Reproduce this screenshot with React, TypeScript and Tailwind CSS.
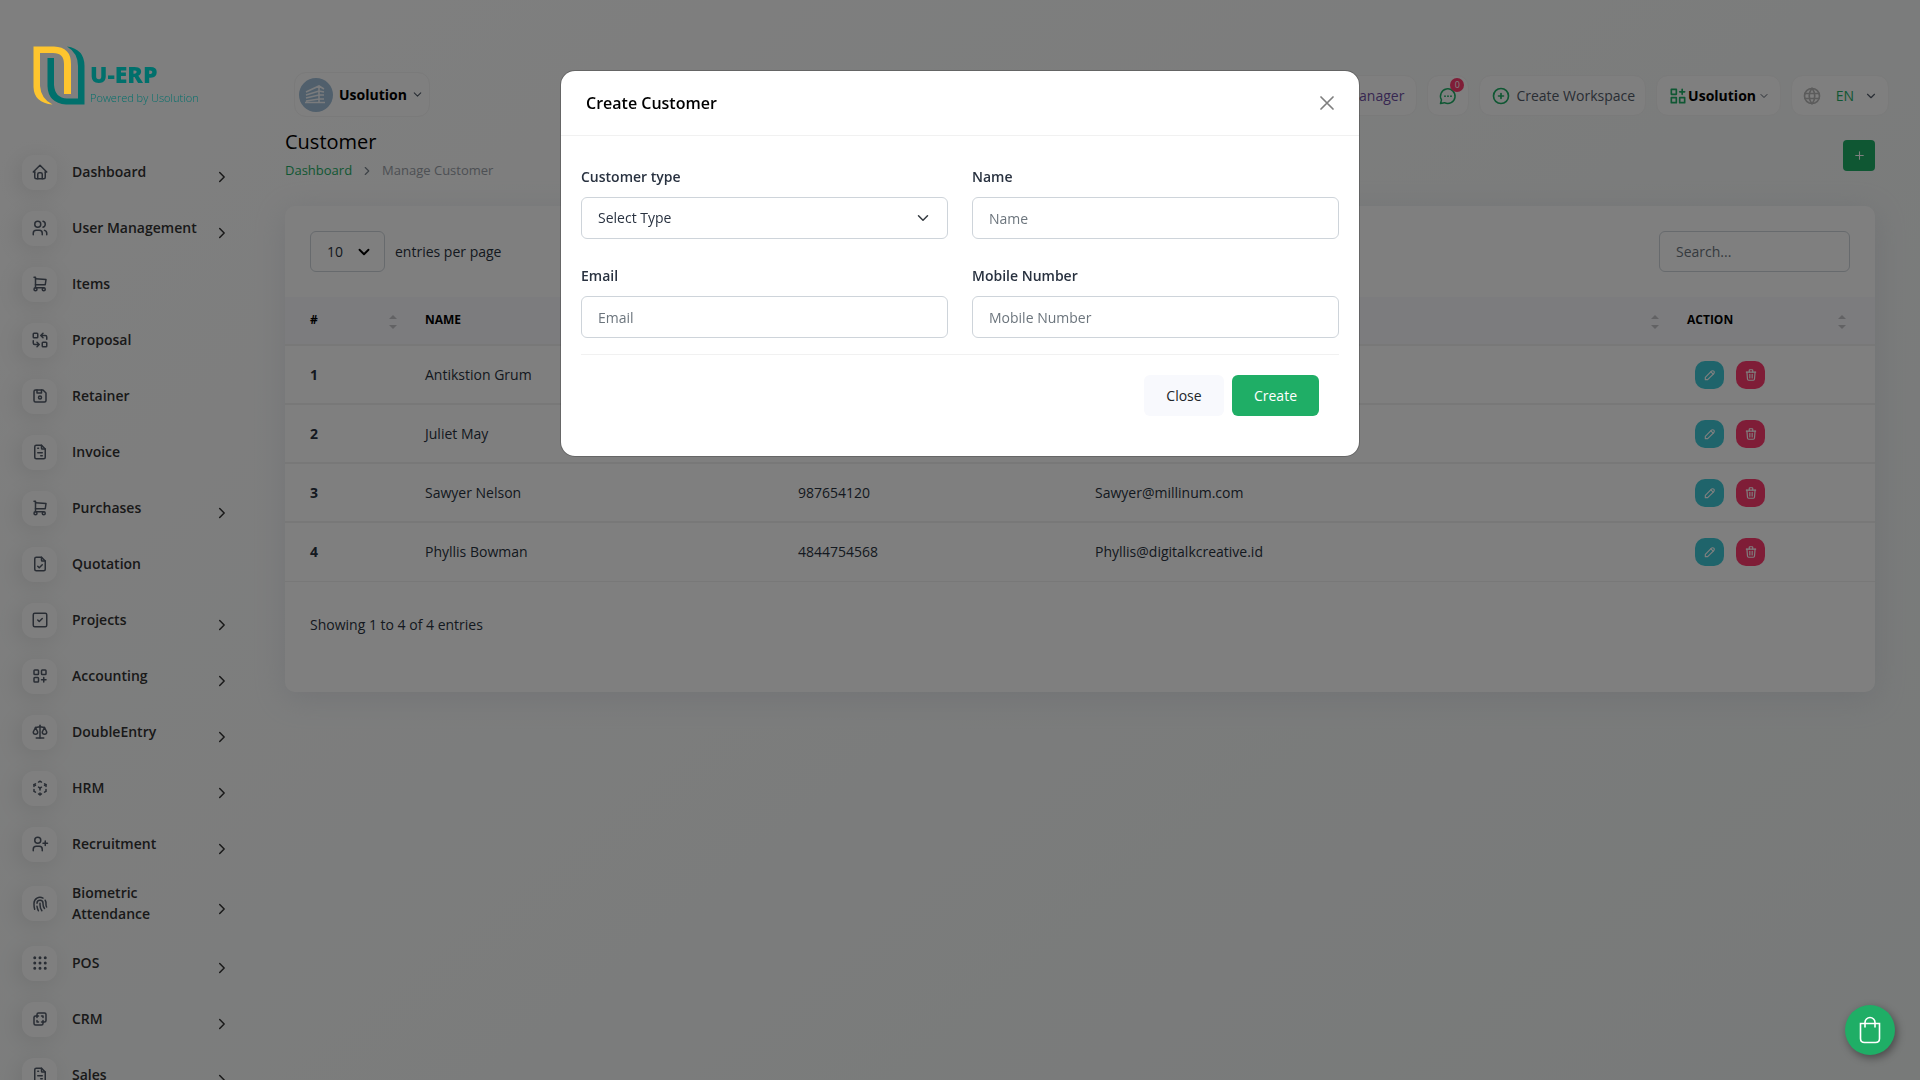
import React, { useState } from 'react'
import {
  TbHome, TbUsers, TbShoppingCart, TbReplace, TbDeviceFloppy, TbFileInvoice, TbFileCheck,
  TbSquareCheck, TbLayoutGridAdd, TbScale, TbFingerprint, TbGridDots,
  TbLayersDifference, TbCube3dSphere, TbChevronRight, TbChevronDown, TbCirclePlus,
  TbWorld, TbPencil, TbTrash, TbPlus,
} from 'react-icons/tb'

function UserPlus({ size }: { size: number }) {
  return (
    <svg viewBox="0 0 24 24" width={size} height={size} fill="none" stroke="currentColor" strokeWidth="2" strokeLinecap="round" strokeLinejoin="round">
      <circle cx="9" cy="7" r="4" />
      <path d="M3 21v-2a4 4 0 0 1 4-4h4a4 4 0 0 1 4 4v2M16 11h6M19 8v6" />
    </svg>
  )
}

function Apps({ size }: { size: number }) {
  return (
    <svg viewBox="0 0 24 24" width={size} height={size} fill="none" stroke="#1fae66" strokeWidth="2" strokeLinecap="round" strokeLinejoin="round">
      <path d="M4 4h6v6H4zM4 14h6v6H4zM14 14h6v6h-6zM14 7h6M17 4v6" />
    </svg>
  )
}

const menu = [
  { label: 'Dashboard', icon: TbHome, arrow: true },
  { label: 'User Management', icon: TbUsers, arrow: true },
  { label: 'Items', icon: TbShoppingCart },
  { label: 'Proposal', icon: TbReplace },
  { label: 'Retainer', icon: TbDeviceFloppy },
  { label: 'Invoice', icon: TbFileInvoice },
  { label: 'Purchases', icon: TbShoppingCart, arrow: true },
  { label: 'Quotation', icon: TbFileCheck },
  { label: 'Projects', icon: TbSquareCheck, arrow: true },
  { label: 'Accounting', icon: TbLayoutGridAdd, arrow: true },
  { label: 'DoubleEntry', icon: TbScale, arrow: true },
  { label: 'HRM', icon: TbCube3dSphere, arrow: true },
  { label: 'Recruitment', icon: UserPlus, arrow: true },
  { label: 'Biometric Attendance', icon: TbFingerprint, arrow: true },
  { label: 'POS', icon: TbGridDots, arrow: true },
  { label: 'CRM', icon: TbLayersDifference, arrow: true },
  { label: 'Sales', icon: TbFileInvoice, arrow: true },
]

const customers = [
  { id: 1, name: 'Antikstion Grum', contact: '', email: '' },
  { id: 2, name: 'Juliet May', contact: '', email: '' },
  { id: 3, name: 'Sawyer Nelson', contact: '987654120', email: 'Sawyer@millinum.com' },
  { id: 4, name: 'Phyllis Bowman', contact: '4844754568', email: 'Phyllis@digitalkcreative.id' },
]

const pill = 'flex h-[41px] items-center rounded-xl border border-[#f4f4f4] bg-white'
const field = 'h-[42px] w-full rounded-md border border-[#ced4da] bg-white px-4 text-sm text-[#293240] outline-none placeholder:text-[#6c757d]'

function Logo() {
  return (
    <a href="#" aria-label="U-ERP" className="relative z-50 ml-5 mt-[14px] flex h-[122px] items-center pl-[13px]">
      <svg viewBox="33 46 52 59" className="h-[59px] w-[52px] shrink-0">
        <path fill="#fec52e" d="M33.5 46.5H54Q71 47 71 64V94H64V64Q64 53 53 53H40V86Q41 99 52.500 104.500Q34 103 33.500 87Z" />
        <path fill="#00706c" d="M67 46.500Q84.500 49 84.500 66V104.500H66Q48 103 47.500 86V58H54V85Q55 98 67 98.500H78V66Q78 53 67 46.500Z" />
      </svg>
      <span className="ml-[5px] flex flex-col pt-5 text-[#00706c]">
        <span className="text-[23px] font-extrabold leading-[26px]">U-ERP</span>
        <span className="whitespace-nowrap text-[11px] font-light leading-[22px]">Powered by Usolution</span>
      </span>
    </a>
  )
}

function Sidebar() {
  return (
    <aside className="h-screen w-[245px] shrink-0 overflow-hidden">
      <Logo />
      <nav className="pt-2">
        {menu.map((item) => (
          <a key={item.label} href="#" className="flex min-h-14 items-center py-[10px] pl-[22px] pr-[14px]">
            <span className="grid size-[35px] shrink-0 place-items-center rounded-xl bg-white text-[#525b69] shadow-[-3px_4px_23px_rgba(0,0,0,0.1)]">
              <item.icon size={18} />
            </span>
            <span className="ml-[15px] w-[134px] pb-px text-sm font-semibold leading-[21px] text-[#333]">{item.label}</span>
            {item.arrow && <TbChevronRight size={18} className="ml-2 mt-[10px] text-[#333]" />}
          </a>
        ))}
      </nav>
    </aside>
  )
}

function Avatar() {
  return (
    <svg viewBox="0 0 34 34" className="size-[34px]">
      <circle cx="17" cy="17" r="17" fill="#a0bfd8" />
      <path stroke="#f4f7fa" strokeWidth="1.600" fill="none" d="M7 14l13-6 5 3M7 17l13-4 5 1M7 20l13-3h5M7 23l13-2h5M20 8v16M6 24.500h20" />
    </svg>
  )
}

function Header() {
  return (
    <header className="flex items-center justify-between pl-[9px] pr-[31px] pt-[72px]">
      <button className="flex h-[45px] items-center rounded-xl border border-[#f4f4f4] bg-white pl-1 pr-[5px] text-sm font-bold text-black">
        <Avatar />
        <span className="ml-[6px] mr-1">Usolution</span>
        <TbChevronDown size={13} className="text-[#525b69]" />
      </button>
      <div className="flex gap-[10px] pt-[2px] text-sm">
        <a href="#" className={`${pill} pl-[10px] pr-3 text-[#6f4fa3]`}>Login As Manager</a>
        <button aria-label="Messages" className={`${pill} relative w-[42px] justify-center text-[#1fae66]`}>
          <svg viewBox="0 0 20 20" className="size-5" fill="none" stroke="currentColor" strokeWidth="1.500" strokeLinecap="round">
            <path d="M2.500 17.500l1-3.600a7.300 7.300 0 1 1 3 2.800z" strokeLinejoin="round" />
            <path d="M7 10.200v.01M10 10.200v.01M13 10.200v.01" strokeWidth="1.800" />
          </svg>
          <span className="absolute right-1 top-[2px] grid size-[14px] place-items-center rounded-full bg-[#ff3a6e] text-[9px] text-white">0</span>
        </button>
        <a href="#" className={`${pill} gap-[5px] pl-[11px] pr-[10px] text-[#525b69]`}>
          <TbCirclePlus size={20} className="text-[#1fae66]" />Create Workspace
        </a>
        <button className={`${pill} pl-[11px] pr-[10px] font-bold text-black`}>
          <Apps size={20} />
          <span className="mr-[2px]">Usolution</span>
          <TbChevronDown size={12} className="text-[#525b69]" />
        </button>
        <button className={`${pill} w-[98px] justify-between px-[10px] text-[#1fae66]`}>
          <TbWorld size={20} className="text-[#b8b8b8]" />
          <span className="ml-1">EN</span>
          <TbChevronDown size={14} className="text-[#525b69]" />
        </button>
      </div>
    </header>
  )
}

function SortIcon() {
  return (
    <svg viewBox="0 0 8 14" className="mt-[5px] h-[14px] w-2" fill="#c4c4c8">
      <path d="M4 0l4 4H0zM4 14l4-4H0z" />
    </svg>
  )
}

function CustomerTable() {
  const th = 'h-[48px] pb-[2px] pl-[25px] pr-[3px] text-left text-xs font-bold text-black'
  const heads = [
    { text: '#', cls: 'w-[115px]' },
    { text: 'NAME', cls: 'w-[373px]' },
    { text: 'CONTACT', cls: 'w-[297px]' },
    { text: 'EMAIL', cls: '' },
    { text: 'ACTION', cls: 'w-[213px]' },
  ]
  return (
    <table className="w-full table-fixed border-collapse text-sm text-[#293240]">
      <thead className="bg-[#f8f8fc]">
        <tr className="border-b-2 border-[#f1f1f1]">
          {heads.map((h) => (
            <th key={h.text} className={`${th} ${h.cls}`}>
              <div className={h.text === 'ACTION' ? 'flex items-center justify-between pr-[26px]' : 'flex items-center justify-between'}>
                {h.text}
                <SortIcon />
              </div>
            </th>
          ))}
        </tr>
      </thead>
      <tbody>
        {customers.map((c) => (
          <tr key={c.id} className="h-[59px] border-b-2 border-[#f1f1f1] last:border-b">
            <td className="pl-[25px] font-bold">{c.id}</td>
            <td className="pl-[25px]">{c.name}</td>
            <td className="pl-[25px]">{c.contact}</td>
            <td className="pl-[25px]">{c.email}</td>
            <td className="pl-[33px]">
              <div className="flex gap-3">
                <button aria-label="Edit" className="grid h-7 w-[29px] place-items-center rounded-[10px] bg-[#3ec9d6] text-white"><TbPencil size={14} /></button>
                <button aria-label="Delete" className="grid h-7 w-[29px] place-items-center rounded-[10px] bg-[#ff3a6e] text-white"><TbTrash size={14} /></button>
              </div>
            </td>
          </tr>
        ))}
      </tbody>
    </table>
  )
}

function CreateCustomer({ onClose }: { onClose: () => void }) {
  const [form, setForm] = useState({ type: '', name: '', email: '', mobile: '' })
  const label = 'mb-[10px] block text-sm font-semibold leading-[21px] text-[#293240]'
  return (
    <div role="dialog" aria-labelledby="modal-title" className="w-full max-w-[800px] rounded-[15px] border border-black/20 bg-white bg-clip-padding">
      <div className="flex h-[65px] items-center justify-between border-b border-[#f1f1f1] px-[25px]">
        <h5 id="modal-title" className="text-base font-semibold text-black">Create Customer</h5>
        <button aria-label="Close dialog" onClick={onClose} className="text-black/50">
          <svg viewBox="0 0 14 14" className="size-[14px]" stroke="currentColor" strokeWidth="1.700" strokeLinecap="round">
            <path d="M1 1l12 12M13 1L1 13" />
          </svg>
        </button>
      </div>
      <form className="px-5 pb-10 pt-[30px]" onSubmit={(e) => e.preventDefault()}>
        <div className="grid grid-cols-2 gap-x-6 gap-y-[26px]">
          <div>
            <label htmlFor="type" className={label}>Customer type</label>
            <div className="relative">
              <select id="type" value={form.type} onChange={(e) => setForm({ ...form, type: e.target.value })} className={`${field} appearance-none`}>
                <option value="">Select Type</option>
              </select>
              <TbChevronDown size={18} className="pointer-events-none absolute right-4 top-3 text-[#343a40]" />
            </div>
          </div>
          <div>
            <label htmlFor="name" className={label}>Name</label>
            <input id="name" placeholder="Name" value={form.name} onChange={(e) => setForm({ ...form, name: e.target.value })} className={field} />
          </div>
          <div>
            <label htmlFor="email" className={label}>Email</label>
            <input id="email" placeholder="Email" value={form.email} onChange={(e) => setForm({ ...form, email: e.target.value })} className={field} />
          </div>
          <div>
            <label htmlFor="mobile" className={label}>Mobile Number</label>
            <input id="mobile" placeholder="Mobile Number" value={form.mobile} onChange={(e) => setForm({ ...form, mobile: e.target.value })} className={field} />
          </div>
        </div>
        <div className="mt-4 flex justify-end gap-2 border-t border-[#f1f1f1] pr-5 pt-5 text-sm font-medium">
          <button type="button" onClick={onClose} className="h-[41px] w-20 rounded-md bg-[#f8f9fd] text-[#212529]">Close</button>
          <button type="submit" className="h-[41px] w-[87px] rounded-md bg-[#1fae66] text-white">Create</button>
        </div>
      </form>
    </div>
  )
}

function App() {
  const [open, setOpen] = useState(true)
  return (
    <div className="flex h-screen overflow-hidden bg-linear-[141deg] from-white from-5% to-[#f0f4f3] font-['Open_Sans',sans-serif]">
      <Sidebar />
      <div className="min-w-0 flex-1 pl-10">
        <Header />
        <main className="pr-[45px]">
          <div className="flex items-center justify-between pt-[10px]">
            <div>
              <h4 className="text-xl font-medium leading-[30px] text-black">Customer</h4>
              <nav className="mt-1 flex h-5 items-center gap-2 text-[13px]">
                <a href="#" className="text-[#1fae66]">Dashboard</a>
                <TbChevronRight size={14} className="text-[#7b858e]" />
                <span className="text-[#9aa0a8]">Manage Customer</span>
              </nav>
            </div>
            <button aria-label="Create" onClick={() => setOpen(true)} className="mt-[3px] grid h-[31px] w-8 place-items-center rounded bg-[#1fae66] text-white"><TbPlus size={13} /></button>
          </div>
          <section className="mt-[25px] rounded-[10px] bg-white text-sm text-[#293240] shadow-[0_6px_30px_rgba(182,186,203,0.3)]">
            <div className="flex items-center justify-between p-[25px]">
              <div className="flex items-center gap-[10px]">
                <div className="relative">
                  <select id="perpage" className="h-[41px] w-[75px] appearance-none rounded-md border border-[#ced4da] bg-white pl-4">
                    <option>10</option>
                  </select>
                  <TbChevronDown size={18} strokeWidth={2.5} className="pointer-events-none absolute right-3 top-3 text-black" />
                </div>
                <label htmlFor="perpage">entries per page</label>
              </div>
              <input aria-label="Search" placeholder="Search..." className="h-[41px] w-[191px] rounded-md border border-[#ced4da] px-4 outline-none placeholder:text-[#6c757d]" />
            </div>
            <CustomerTable />
            <p className="px-[25px] pb-[57px] pt-8 leading-[21px]">Showing 1 to 4 of 4 entries</p>
          </section>
        </main>
      </div>

      {open && (
        <div className="fixed inset-0 z-40 flex items-start justify-center bg-black/50 pt-[70px]">
          <CreateCustomer onClose={() => setOpen(false)} />
        </div>
      )}

      <button aria-label="Cart" className="fixed bottom-[25px] right-[25px] z-50 grid size-[50px] place-items-center rounded-full bg-[#1fae66] text-white shadow-[2px_3px_8px_rgba(0,0,0,0.4)]">
        <svg viewBox="0 0 22 28" className="h-7 w-[22px]" fill="none" stroke="currentColor" strokeWidth="1.600" strokeLinecap="round">
          <path d="M1.500 7.500h19v15q0 4-4 4h-11q-4 0-4-4zM6 11V6.500a5 5 0 0 1 10 0V11" />
        </svg>
      </button>
    </div>
  )
}

export default App
